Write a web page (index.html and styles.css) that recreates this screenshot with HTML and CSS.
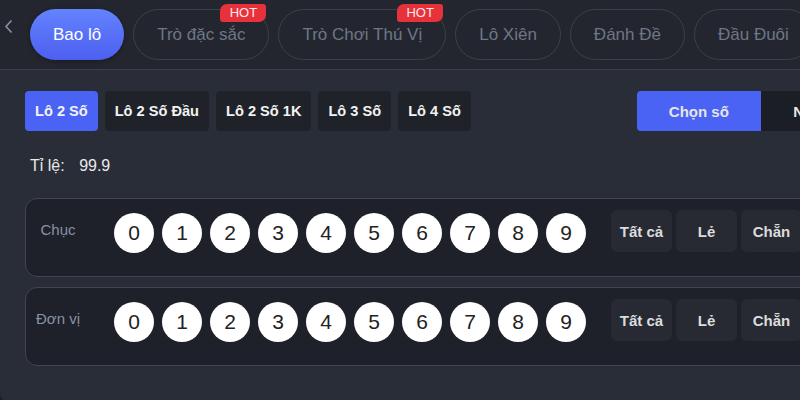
FILE: index.html
```html
<!DOCTYPE html>
<html lang="vi">
<head>
    <meta charset="UTF-8">
    <meta name="viewport" content="width=device-width, initial-scale=1.0">
    <title>Bao lô</title>
    <link rel="stylesheet" href="styles.css">
</head>
<body>

    <div class="game">
        <nav class="game-tabs">
            <span class="back">
                <svg width="9" height="15" viewBox="0 0 9 15"><path d="M7.5 1.5 L2 7.5 L7.5 13.5" fill="none" stroke="#8a909c" stroke-width="1.6"/></svg>
            </span>
            <div class="pill active">Bao lô</div>
            <div class="pill">Trò đặc sắc<span class="hot">HOT</span></div>
            <div class="pill">Trò Chơi Thú Vị<span class="hot">HOT</span></div>
            <div class="pill">Lô Xiên</div>
            <div class="pill">Đánh Đề</div>
            <div class="pill">Đầu Đuôi</div>
        </nav>

        <main class="panel">
            <div class="bet-types">
                <div class="bet-type active">Lô 2 Số</div>
                <div class="bet-type">Lô 2 Số Đầu</div>
                <div class="bet-type">Lô 2 Số 1K</div>
                <div class="bet-type">Lô 3 Số</div>
                <div class="bet-type">Lô 4 Số</div>

                <div class="mode-switch">
                    <div class="mode active">Chọn số</div>
                    <div class="mode">Nhập số</div>
                </div>
            </div>

            <p class="odds">Tỉ lệ: <span class="odds-value">99.9</span></p>

            <div class="pick-row">
                <div class="row-label">Chục</div>
                <div class="balls" id="balls-tens"></div>
                <div class="quick">
                    <button>Tất cả</button>
                    <button>Lẻ</button>
                    <button>Chẵn</button>
                </div>
            </div>

            <div class="pick-row">
                <div class="row-label">Đơn vị</div>
                <div class="balls" id="balls-units"></div>
                <div class="quick">
                    <button>Tất cả</button>
                    <button>Lẻ</button>
                    <button>Chẵn</button>
                </div>
            </div>
        </main>
    </div>

    <script>
        // fill both rows with balls 0..9
        ['balls-tens', 'balls-units'].forEach(id => {
            const row = document.getElementById(id);
            for (let i = 0; i < 10; i++) {
                const ball = document.createElement('div');
                ball.classList.add('ball');
                ball.textContent = i;
                row.appendChild(ball);
            }
        });
    </script>

</body>
</html>
```

FILE: styles.css
```css
body {
    margin: 0;
    padding: 0;
    width: 800px;
    height: 400px;
    overflow: hidden;
    background-color: #1c1f26;
    font-family: "Liberation Sans", Arial, sans-serif;
}

.game {
    width: 940px;
}

.game-tabs {
    display: flex;
    align-items: center;
    height: 69px;
    background-color: #23262e;
    border-bottom: 1px solid #3a3e48;
    padding-left: 4px;
    gap: 9px;
}

.back {
    display: flex;
    width: 17px;
    margin-top: -16px;
}

.pill {
    position: relative;
    box-sizing: border-box;
    height: 51px;
    padding: 0 23px;
    display: flex;
    align-items: center;
    border: 1px solid #3c404a;
    border-radius: 26px;
    font-size: 17px;
    color: #6f7686;
    white-space: nowrap;
}

.pill.active {
    border: none;
    padding: 0 23px;
    color: #ffffff;
    background: linear-gradient(180deg, #6383ff, #4d5ff0);
    box-shadow: 0 1px 4px rgba(0, 0, 0, 0.35);
}

.hot {
    position: absolute;
    top: -6px;
    right: 2px;
    width: 46px;
    height: 18px;
    line-height: 18px;
    text-align: center;
    background-color: #e7323b;
    color: #ffe9e9;
    font-size: 13px;
    border-radius: 7px 3px 7px 3px;
}

.panel {
    background-color: #292d37;
    padding: 21px 0 27px 25px;
    border-bottom-left-radius: 10px;
}

.bet-types {
    display: flex;
    gap: 7px;
}

.bet-type {
    height: 40px;
    padding: 0 10px;
    display: flex;
    align-items: center;
    background-color: #1f2229;
    border-radius: 4px;
    color: #f2f2f2;
    font-size: 14.6px;
    font-weight: bold;
}

.bet-type.active {
    background-color: #4a63f5;
}

.mode-switch {
    display: flex;
    margin-left: 159px;
}

.mode {
    width: 124px;
    height: 40px;
    display: flex;
    align-items: center;
    justify-content: center;
    background-color: #1b1e25;
    color: #e6e6e6;
    font-size: 15px;
    font-weight: bold;
}

.mode.active {
    background-color: #4a63f5;
    border-radius: 4px 0 0 4px;
}

.odds {
    margin: 26px 0 23px 5px;
    font-size: 16px;
    color: #e9e9e9;
}

.odds-value {
    margin-left: 10px;
}

.pick-row {
    display: flex;
    align-items: flex-start;
    margin-bottom: 10px;
    padding-top: 11px;
    box-sizing: border-box;
    height: 79px;
    background-color: #1e2129;
    border: 1px solid #41454f;
    border-radius: 12px;
}

.row-label {
    width: 64px;
    margin-top: 11px;
    text-align: center;
    font-size: 15px;
    color: #8891a6;
}

.balls {
    display: flex;
    gap: 8px;
    margin-left: 24px;
    margin-top: 3px;
}

.ball {
    width: 40px;
    height: 40px;
    border-radius: 50%;
    background-color: #ffffff;
    display: flex;
    align-items: center;
    justify-content: center;
    font-size: 21px;
    color: #222;
}

.quick {
    display: flex;
    gap: 4px;
    margin-left: 25px;
}

.quick button {
    width: 61px;
    height: 42px;
    border: none;
    border-radius: 6px;
    background-color: #272a33;
    color: #dcdcdc;
    font-family: "Liberation Sans", Arial, sans-serif;
    font-size: 15px;
    font-weight: bold;
}
```
